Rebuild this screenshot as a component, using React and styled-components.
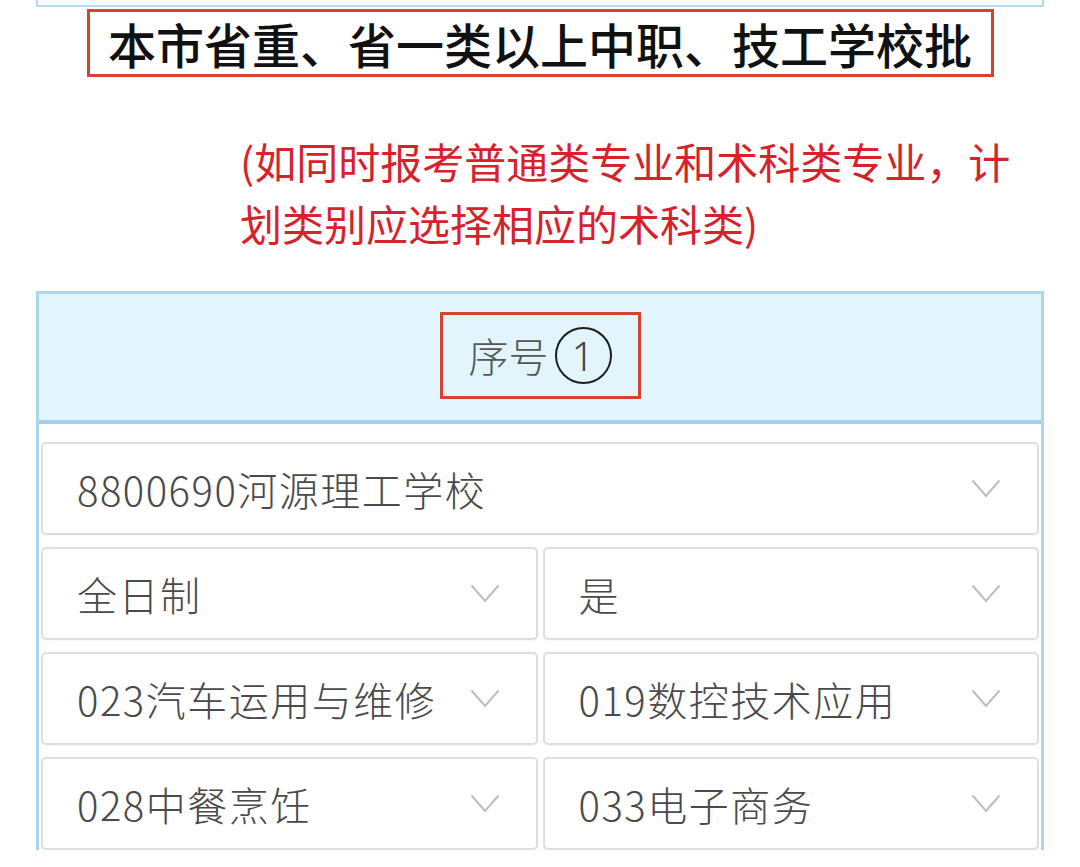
import styled, { createGlobalStyle } from 'styled-components';

const GlobalStyle = createGlobalStyle`
  html, body {
    margin: 0;
    padding: 0;
    background: #ffffff;
  }
  body {
    font-family: "Noto Sans CJK SC", "Noto Sans", sans-serif;
  }
`;

const Page = styled.div`
  width: 1080px;
  display: flex;
  flex-direction: column;
`;

const TopStub = styled.div`
  margin: 0 36px;
  height: 5px;
  background: #f7fcfe;
  border: 2px solid #b6dbee;
  border-top: none;
`;

const TitleRow = styled.div`
  display: flex;
  justify-content: center;
  margin-top: 2px;
`;

const TitleBox = styled.div`
  box-sizing: border-box;
  width: 907px;
  height: 68px;
  border: 3px solid #d8412f;
  display: flex;
  align-items: center;
  justify-content: center;
  font-size: 48px;
  font-weight: 500;
  color: #111;
`;

const Note = styled.p`
  margin: 53px 0 0 240px;
  width: 790px;
  font-size: 42px;
  line-height: 62px;
  color: #d6232b;
`;

const Table = styled.div`
  margin: 37px 36px 0;
  border: 3px solid #acd4ea;
  border-bottom: none;
`;

const Header = styled.div`
  height: 126px;
  background: #e2f5fc;
  border-bottom: 4px solid #a6cdec;
  display: flex;
  align-items: center;
  justify-content: center;
`;

const IndexBox = styled.div`
  box-sizing: border-box;
  width: 201px;
  height: 87px;
  margin-top: -4px;
  border: 3px solid #d8412f;
  display: flex;
  align-items: center;
  justify-content: center;
  gap: 6px;
  font-size: 40px;
  font-weight: 300;
  color: #555;
`;

const Circled = styled.span`
  box-sizing: border-box;
  width: 57px;
  height: 57px;
  border: 2px solid #1e1e1e;
  border-radius: 50%;
  display: flex;
  align-items: center;
  justify-content: center;
  font-family: "Noto Sans", sans-serif;
  font-weight: 300;
  font-size: 40px;
  color: #444;
`;

const Body = styled.div`
  padding: 18px 2px 0;
  display: grid;
  grid-template-columns: 1fr 1fr;
  column-gap: 5px;
  row-gap: 12px;
`;

const Select = styled.div`
  box-sizing: border-box;
  grid-column: ${(p) => (p.$wide ? '1 / -1' : 'auto')};
  height: 93px;
  border: 2px solid #dedede;
  border-radius: 5px;
  padding: 0 36px 0 34px;
  display: flex;
  align-items: center;
  justify-content: space-between;
  font-size: 40px;
  font-weight: 300;
  color: #4a4a4a;
  box-shadow: 0 1px 2px rgba(0, 0, 0, 0.04);
`;

const Label = styled.span`
  white-space: nowrap;
  letter-spacing: 1.5px;
`;

function Chevron() {
  return (
    <svg width="30" height="19" viewBox="0 0 30 19" fill="none">
      <polyline
        points="1.5,1.5 15,17 28.5,1.5"
        stroke="#bdbdbd"
        strokeWidth="2"
      />
    </svg>
  );
}

const rows = [
  { text: '8800690河源理工学校', wide: true },
  { text: '全日制' },
  { text: '是' },
  { text: '023汽车运用与维修' },
  { text: '019数控技术应用' },
  { text: '028中餐烹饪' },
  { text: '033电子商务' },
];

export default function App() {
  return (
    <Page>
      <GlobalStyle />
      <TopStub />
      <TitleRow>
        <TitleBox>本市省重、省一类以上中职、技工学校批</TitleBox>
      </TitleRow>
      <Note>(如同时报考普通类专业和术科类专业，计划类别应选择相应的术科类)</Note>
      <Table>
        <Header>
          <IndexBox>
            序号
            <Circled>1</Circled>
          </IndexBox>
        </Header>
        <Body>
          {rows.map((r) => (
            <Select key={r.text} $wide={r.wide}>
              <Label>{r.text}</Label>
              <Chevron />
            </Select>
          ))}
        </Body>
      </Table>
    </Page>
  );
}
